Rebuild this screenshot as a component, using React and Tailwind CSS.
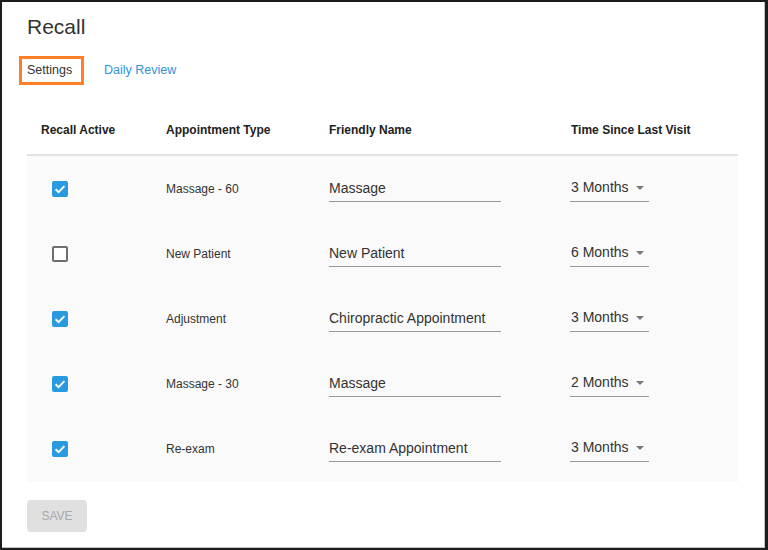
import React, { useState } from 'react';

const ROWS = [
  { id: 1, active: true, type: 'Massage - 60', name: 'Massage', months: '3 Months' },
  { id: 2, active: false, type: 'New Patient', name: 'New Patient', months: '6 Months' },
  { id: 3, active: true, type: 'Adjustment', name: 'Chiropractic Appointment', months: '3 Months' },
  { id: 4, active: true, type: 'Massage - 30', name: 'Massage', months: '2 Months' },
  { id: 5, active: true, type: 'Re-exam', name: 'Re-exam Appointment', months: '3 Months' },
];

function Checkbox({ checked, onChange }) {
  if (checked) {
    return (
      <button onClick={onChange} className="w-4 h-4 rounded-[2px] bg-[#2a9ae0] flex items-center justify-center">
        <svg width="16" height="16" viewBox="0 0 16 16">
          <polyline points="3.6,8.2 6.6,11.1 12.4,5.2" fill="none" stroke="white" strokeWidth="1.9" />
        </svg>
      </button>
    );
  }
  return <button onClick={onChange} className="w-4 h-4 rounded-[2px] border-2 border-[#6e6e6e] bg-white" />;
}

export default function App() {
  const [rows, setRows] = useState(ROWS);

  const toggle = (id) => setRows(rs => rs.map(r => r.id === id ? { ...r, active: !r.active } : r));

  return (
    <div className="w-[768px] h-[550px] bg-white border-l-2 border-t-2 border-r-[3px] border-b-2 border-[#1c1c1c] font-['Liberation_Sans',Arial,sans-serif]">
      <div className="h-full border-r border-b border-[#c4c4c4] pl-[25px] pt-[12px]">
        <h1 className="text-[21px] leading-[26px] text-[#333] font-normal">Recall</h1>

        <div className="flex items-center mt-[16px] -ml-[8px]">
          <div className="w-[65px] h-[29px] border-[3px] border-[#ff7f27] pl-[5px] flex items-center text-[12.5px] text-[#333]">
            Settings
          </div>
          <div className="ml-[20px] text-[12.5px] text-[#2f94dc]">Daily Review</div>
        </div>

        <div className="w-[711px] mt-[21px]">
          <div className="grid grid-cols-[139px_163px_241px_1fr] h-[50px] items-center border-b-2 border-[#e3e3e3] text-[12px] leading-[16px] font-bold text-[#222]">
            <div className="pl-[14px]">Recall Active</div>
            <div>Appointment Type</div>
            <div>Friendly Name</div>
            <div className="pl-[1px]">Time Since Last Visit</div>
          </div>

          <div className="bg-[#fafafa] pb-[1px]">
            {rows.map(r => (
              <div key={r.id} className="grid grid-cols-[139px_163px_241px_1fr] h-[65px] items-center">
                <div className="pl-[25px] flex">
                  <Checkbox checked={r.active} onChange={() => toggle(r.id)} />
                </div>
                <div className="text-[12px] leading-[16px] text-[#333]">{r.type}</div>
                <div>
                  <div className="w-[172px] mt-[3px] pb-[3px] border-b border-[#9a9a9a] text-[14px] leading-[20px] text-[#333]">
                    {r.name}
                  </div>
                </div>
                <div>
                  <div className="w-[79px] mt-[3px] pb-[4px] border-b border-[#9a9a9a] flex items-center text-[14px] leading-[19px] text-[#333]">
                    <span className="pl-[1px]">{r.months}</span>
                    <svg className="ml-[7px] mt-[1px]" width="8" height="4" viewBox="0 0 8 4">
                      <polygon points="0,0 8,0 4,4" fill="#777" />
                    </svg>
                  </div>
                </div>
              </div>
            ))}
          </div>

          <button disabled className="mt-[18px] w-[60px] h-[32px] rounded-[4px] bg-[#e0e0e0] text-[12px] text-[#a8a8a8] flex items-center justify-center">
            SAVE
          </button>
        </div>
      </div>
    </div>
  );
}
